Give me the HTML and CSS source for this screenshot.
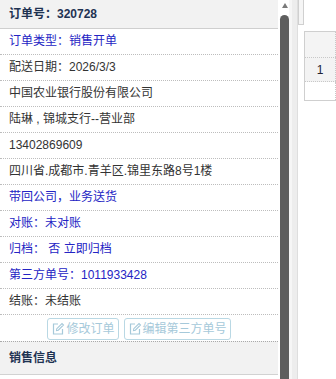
FILE: index.html
```html
<!DOCTYPE html>
<html>
<head>
<meta charset="utf-8">
<link rel="stylesheet" href="styles.css">
</head>
<body>
<div class="layout">
  <div class="left">
    <div class="panel">
      <div class="head">订单号：320728</div>
      <div class="row blue">订单类型：销售开单</div>
      <div class="row">配送日期：2026/3/3</div>
      <div class="row">中国农业银行股份有限公司</div>
      <div class="row">陆琳 , 锦城支行--营业部</div>
      <div class="row">13402869609</div>
      <div class="row">四川省.成都市.青羊区.锦里东路8号1楼</div>
      <div class="row blue">带回公司，业务送货</div>
      <div class="row blue">对账：未对账</div>
      <div class="row blue">归档：&nbsp;否 立即归档</div>
      <div class="row blue">第三方单号：1011933428</div>
      <div class="row">结账：未结账</div>
      <div class="row btns">
        <span class="btn"><svg width="14" height="14" viewBox="0 0 14 14"><path d="M7 2H2.5v10h9V7" fill="none" stroke="currentColor" stroke-width="1.2"/><path d="M5.5 8.5l.3-1.8L11 1.5l1.5 1.5-5.2 5.2z" fill="none" stroke="currentColor" stroke-width="1.1"/></svg>修改订单</span>
        <span class="btn"><svg width="14" height="14" viewBox="0 0 14 14"><path d="M7 2H2.5v10h9V7" fill="none" stroke="currentColor" stroke-width="1.2"/><path d="M5.5 8.5l.3-1.8L11 1.5l1.5 1.5-5.2 5.2z" fill="none" stroke="currentColor" stroke-width="1.1"/></svg>编辑第三方单号</span>
      </div>
      <div class="head sub">销售信息</div>
    </div>
  </div>
  <div class="scrollbar">
    <div class="arrow"></div>
    <div class="thumb"></div>
  </div>
  <div class="splitter"></div>
  <div class="right">
    <div class="topbox"></div>
    <div class="table">
      <div class="trow thead"><div class="num"></div></div>
      <div class="trow tgrey"><div class="num">1</div></div>
      <div class="trow"><div class="num"></div></div>
    </div>
  </div>
</div>
</body>
</html>
```

FILE: styles.css
```css
* { box-sizing: border-box; }
html, body { margin: 0; padding: 0; background: #fff; }
body {
  font-family: "Liberation Sans", "Noto Sans CJK SC", sans-serif;
  font-size: 12px;
  color: #333;
  overflow: hidden;
  width: 336px;
  height: 379px;
}
.layout { display: flex; height: 379px; overflow: hidden; }
.left { width: 280px; flex: none; padding-right: 2px; }
.panel { width: 278px; }
.head {
  height: 29px;
  background: #f2f2f2;
  border-bottom: 1px solid #cfcfcf;
  padding-left: 9px;
  line-height: 28px;
  font-weight: bold;
  color: #1f3352;
}
.head.sub {
  height: 34px;
  line-height: 32px;
  border-top: 1px dotted #aaa;
  border-bottom: 1px solid #d2d2d2;
}
.row {
  height: 26px;
  line-height: 25px;
  padding-left: 9px;
  border-bottom: 1px dotted #bdbdbd;
  white-space: nowrap;
}
.row.blue { color: #2424c4; }
.row.btns {
  border-bottom: none;
  height: 26px;
  display: flex;
  justify-content: center;
  align-items: flex-start;
  gap: 5px;
  padding: 3px 0 0 0;
}
.btn {
  display: inline-flex;
  align-items: center;
  height: 22px;
  padding: 0 3px;
  border: 1px solid #b9d8e4;
  border-radius: 3px;
  color: #a6c9da;
  font-size: 12px;
  line-height: 20px;
}
.btn svg { margin-right: 1px; }
.scrollbar {
  width: 9px;
  flex: none;
  display: flex;
  flex-direction: column;
}
.arrow {
  width: 0; height: 0;
  margin: 3px auto 0;
  border-left: 3.5px solid transparent;
  border-right: 3.5px solid transparent;
  border-bottom: 5px solid #7a7a7a;
}
.thumb {
  margin-top: 7px;
  flex: 1;
  background: #5e5e5e;
  border-radius: 5px 5px 0 0;
}
.splitter {
  width: 9px;
  flex: none;
  border-left: 3px solid #f6f6f6;
  background: #ededed;
  border-right: 1px solid #dedede;
}
.right { flex: 1; }
.topbox {
  width: 6px;
  height: 25px;
  border: 1px solid #d0d0d0;
  border-top: none;
  background: #f5f5f5;
}
.table {
  margin-top: 6px;
  margin-left: 6px;
  border: 1px solid #cfcfcf;
  border-right: none;
  width: 40px;
}
.trow { height: 24px; border-bottom: 1px dotted #c8c8c8; }
.trow.thead { height: 26px; background: #f4f4f4; }
.trow.tgrey { background: #f3f3f3; }
.trow:last-child { border-bottom: none; height: 18px; }
.num {
  width: 31px;
  height: 100%;
  border-right: 1px dotted #c8c8c8;
  text-align: center;
  line-height: 24px;
  color: #223;
}
```
